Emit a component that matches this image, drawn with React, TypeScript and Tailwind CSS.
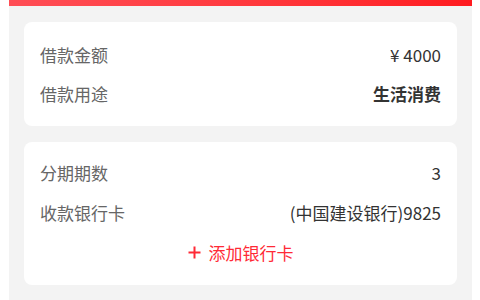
import * as React from "react";

type Row = { label: string; value: string; bold?: boolean };

const loanRows: Row[] = [
  { label: "借款金额", value: "¥ 4000" },
  { label: "借款用途", value: "生活消费", bold: true },
];

const repayRows: Row[] = [
  { label: "分期期数", value: "3" },
  { label: "收款银行卡", value: "(中国建设银行)9825" },
];

function InfoRow({ row, h }: { row: Row; h: string }) {
  return (
    <div className={`flex items-center justify-between ${h}`}>
      <span className="text-[#666666]">{row.label}</span>
      <span className={row.bold ? "font-semibold text-[#333333]" : "text-[#333333]"}>{row.value}</span>
    </div>
  );
}

export default function App() {
  return (
    <div
      className="w-[480px] h-[300px] bg-white overflow-hidden text-[17px] leading-none"
      style={{ fontFamily: '"Noto Sans CJK SC", "Noto Sans", sans-serif' }}
    >
      <div className="ml-[9px] w-[463px] h-full bg-[#f3f3f3] flex flex-col">
        <div className="h-[6px] bg-gradient-to-r from-[#ff4d55] to-[#ff1a1f]" />

        <div className="mx-[15px] mt-[16px] bg-white rounded-lg px-4 pt-[13px] pb-[13px]">
          {loanRows.map((r) => (
            <InfoRow key={r.label} row={r} h="h-[39px]" />
          ))}
        </div>

        <div className="mx-[15px] mt-[16px] bg-white rounded-lg px-4 pt-[10px] pb-[13px]">
          {repayRows.map((r) => (
            <InfoRow key={r.label} row={r} h="h-[40px]" />
          ))}
          <div className="h-[40px] flex items-center justify-center gap-[8px] text-[#ff2a36]">
            <svg width="13" height="13" viewBox="0 0 13 13" className="mt-[1px]">
              <path d="M6.5 0.5v12M0.5 6.5h12" stroke="currentColor" strokeWidth="2" />
            </svg>
            <span>添加银行卡</span>
          </div>
        </div>
      </div>
    </div>
  );
}
